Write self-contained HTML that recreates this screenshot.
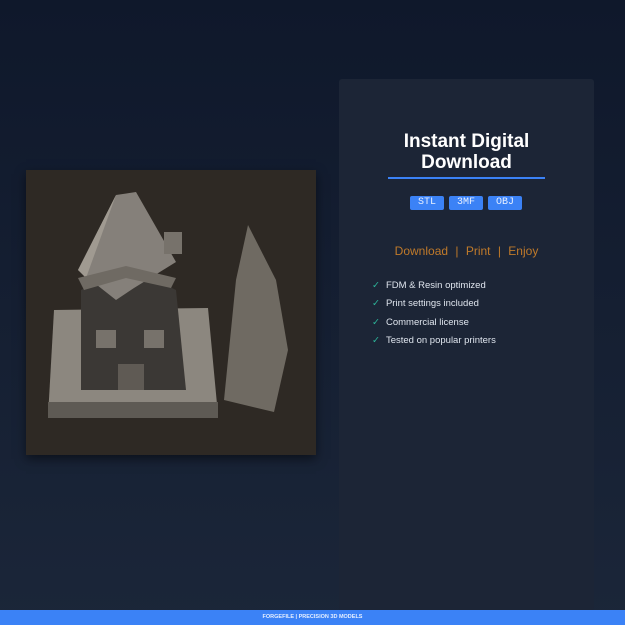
<!DOCTYPE html><html><head><style>
body{margin:0;width:625px;height:625px;overflow:hidden;background:linear-gradient(#0f182b,#1b2639);font-family:"Liberation Sans",sans-serif;position:relative}
.panel{position:absolute;left:339px;top:79px;width:255px;height:531px;background:#1c2536;border-radius:3px}
h1{position:absolute;left:339px;width:255px;top:131px;margin:0;text-align:center;color:#fff;font-size:19px;line-height:21px;font-weight:bold}
.line{position:absolute;left:388px;top:177px;width:157px;height:2px;background:#3b82f6}
.tag{position:absolute;top:196px;width:34px;height:14px;background:#3b82f6;border-radius:2px;color:#e8f0ff;font:10px "Liberation Mono",monospace;text-align:center;line-height:14px}
.dl{position:absolute;left:339px;width:255px;top:244px;text-align:center;color:#c07a2a;font-size:12px}
.dl span{color:#c07a2a;margin:0 4px}
ul{position:absolute;left:372px;top:280px;margin:0;padding:0;list-style:none;color:#dfe5ee;font-size:9.5px}
li{height:18.3px}
li b{color:#2cb59a;font-weight:normal;margin-right:6px}
.foot{position:absolute;left:0;top:610px;width:625px;height:15px;background:#3b82f6;color:#e6efff;font-size:5.5px;font-weight:bold;text-align:center;line-height:15px}
.img{position:absolute;left:26px;top:170px;width:290px;height:285px;background:#2e2924;box-shadow:0 4px 10px rgba(0,0,0,.5)}
</style></head><body>
<div class="img"><svg width="290" height="285">
<polygon points="28,140 182,138 192,245 22,247" fill="#8c877f"/>
<rect x="22" y="232" width="170" height="16" fill="#5e5a54"/>
<polygon points="55,120 100,95 150,120 160,220 55,220" fill="#3b3835"/>
<polygon points="52,100 90,25 110,22 150,92 108,118 90,130" fill="#85807a"/>
<polygon points="90,25 52,100 60,108" fill="#a09a91"/>
<rect x="138" y="62" width="18" height="22" fill="#77726b"/>
<polygon points="52,108 100,96 150,108 145,118 100,108 58,120" fill="#6f6a63"/>
<rect x="70" y="160" width="20" height="18" fill="#77726b"/>
<rect x="118" y="160" width="20" height="18" fill="#77726b"/>
<rect x="92" y="194" width="26" height="26" fill="#5f5a54"/>
<polygon points="222,55 210,110 198,230 248,242 262,180 250,110" fill="#6f6a62"/>
</svg></div>
<div class="panel"></div>
<h1>Instant Digital<br>Download</h1>
<div class="line"></div>
<div class="tag" style="left:410px">STL</div>
<div class="tag" style="left:449px">3MF</div>
<div class="tag" style="left:488px">OBJ</div>
<div class="dl">Download <span>|</span> Print <span>|</span> Enjoy</div>
<ul><li><b>✓</b>FDM &amp; Resin optimized</li><li><b>✓</b>Print settings included</li><li><b>✓</b>Commercial license</li><li><b>✓</b>Tested on popular printers</li></ul>
<div class="foot">FORGEFILE | PRECISION 3D MODELS</div>
</body></html>
